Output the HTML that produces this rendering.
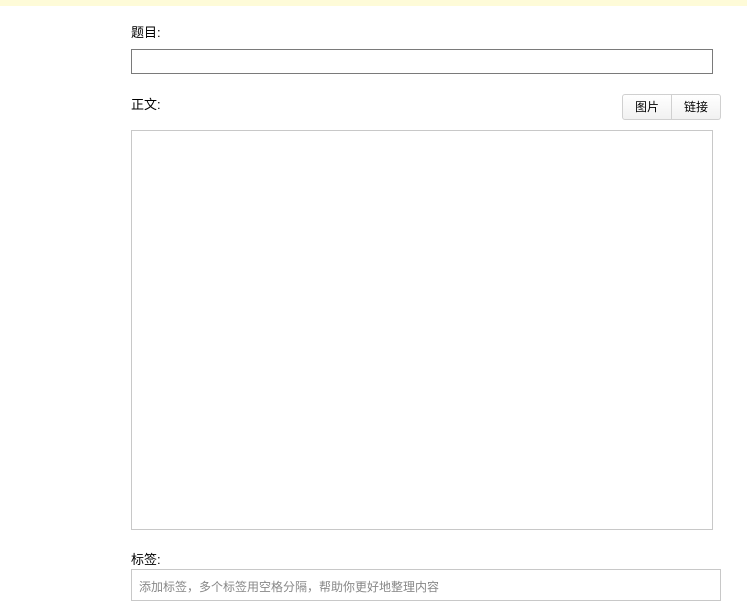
<!DOCTYPE html>
<html><head><meta charset="utf-8"><style>
body{margin:0;width:747px;height:593px;overflow:hidden;background:#fff;font-family:"Liberation Sans","Noto Sans CJK SC",sans-serif;font-size:13px;color:#000;position:relative}
.top{position:absolute;left:0;top:0;width:747px;height:6px;background:#fefbd8}
.a{position:absolute}
.lbl{line-height:16px}
</style></head><body>
<div class="top"></div>
<div class="a lbl" style="left:131px;top:25px">题目:</div>
<div class="a" style="left:131px;top:49px;width:580px;height:23px;border:1px solid #7a7a7a"></div>
<div class="a lbl" style="left:131px;top:97px">正文:</div>
<div class="a" style="left:622px;top:94px;width:97px;height:24px;border:1px solid #d0d0d0;border-radius:3px;background:linear-gradient(#fff,#f1f1f1);display:flex;font-size:12px">
<div style="width:48px;border-right:1px solid #d0d0d0;text-align:center;line-height:24px">图片</div>
<div style="flex:1;text-align:center;line-height:24px">链接</div></div>
<div class="a" style="left:131px;top:130px;width:580px;height:398px;border:1px solid #c8c8c8"></div>
<div class="a lbl" style="left:131px;top:552px">标签:</div>
<div class="a" style="left:131px;top:569px;width:588px;height:30px;border:1px solid #c8c8c8"></div>
<div class="a" style="left:139px;top:578px;color:#888;font-size:12px">添加标签，多个标签用空格分隔，帮助你更好地整理内容</div>
</body></html>
